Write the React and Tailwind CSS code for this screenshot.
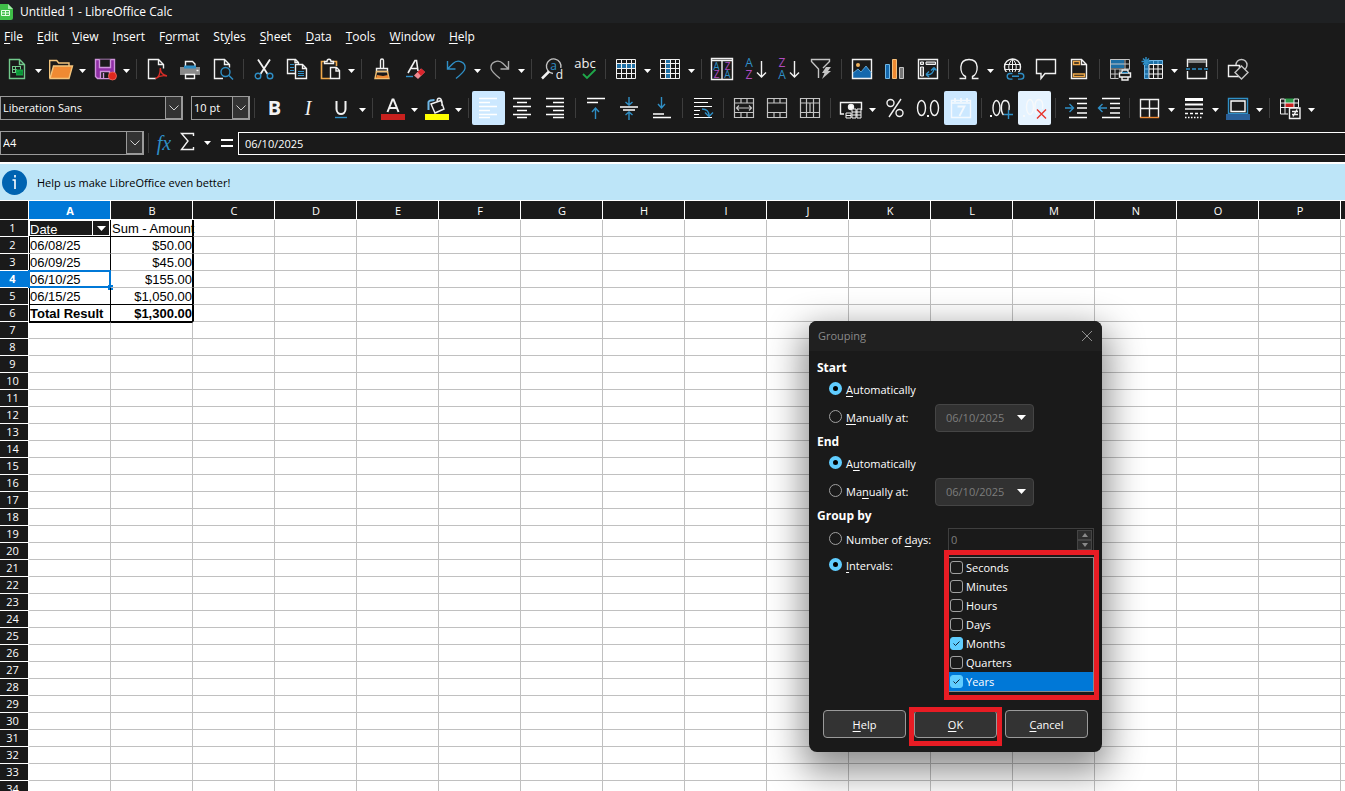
import React, { useState } from 'react';
import clsx from 'clsx';

const BLUE = '#2f8fc6';
const LIGHT = '#f2f2f2';
const GREY = '#c4c4c4';

function Glyph({ children, stroke = LIGHT, width = 1.4 }) {
  return (
    <svg viewBox="0 0 24 24" className="size-6 shrink-0 overflow-visible" fill="none" stroke={stroke} strokeWidth={width} aria-hidden="true">
      {children}
    </svg>
  );
}

function GlyphText({ x, y, size, fill = LIGHT, children, ...rest }) {
  return (
    <text x={x} y={y} fontSize={size} fill={fill} stroke="none" textAnchor="middle" {...rest}>
      {children}
    </text>
  );
}

const icons = {
  new: (
    <Glyph stroke="#72c98c">
      <path d="M4.5 2.5h10l5 5v14h-15z M14.5 2.5v5h5" />
      <path d="M7 9.500h9M7 12.500h5M7 15.500h5M7.500 9.500v6M10.500 9.500v6M15.500 9.500v3" strokeWidth="1" />
      <path d="M11 12.500h7v6h-7z" fill="#12a33f" stroke="none" />
      <path d="M13 17v-2M15 17v-3M16.800 17v-2.500" stroke="#083" strokeWidth="1" />
    </Glyph>
  ),
  open: (
    <Glyph stroke="#f2c47c">
      <path d="M.7 21V3.500h7l2 2.500H20v3" />
      <path d="M4.500 9H23.500L20 21.500H1z" fill="#ef8a33" />
    </Glyph>
  ),
  save: (
    <Glyph stroke="#cf93dc">
      <path d="M2.500 2.500h19v19H4.500l-2-2z" fill="#8f2fa5" />
      <path d="M6.500 2.500v8h11v-8M7.500 21v-6.500h9V21" fill="#1a1a1a" />
      <path d="M10.500 16v5" />
      <circle cx="19.500" cy="19" r="4" fill="#e0281e" stroke="#f06a5c" strokeWidth=".8" />
    </Glyph>
  ),
  pdf: (
    <Glyph>
      <path d="M11 21.500H3.500v-19h10l5 5v4M13.500 2.500v5h5" />
      <path d="M10.500 21.500c3-1 4.800-5 4.800-10.500 0 4.500 2.500 7 6.700 8-4-1-8 0-11.500 2.500z" stroke="#d92d27" />
    </Glyph>
  ),
  print: (
    <Glyph>
      <path d="M7.500 9V4.500h7l2.500 2.500v2" />
      <path d="M2 10h20v8H2z" fill="#8a8a8a" stroke="none" />
      <path d="M6 8.500h12v3H6z" fill={BLUE} stroke="none" />
      <path d="M7.500 17.500h9v4h-9z" fill="#1a1a1a" />
      <path d="M18.500 13.500h2" />
    </Glyph>
  ),
  preview: (
    <Glyph>
      <path d="M12 21.500H3.500v-19h10l5 5v3M13.500 2.500v5h5" />
      <circle cx="14.500" cy="15" r="4.500" stroke={BLUE} />
      <path d="M18 18.500l4 4" stroke={BLUE} />
    </Glyph>
  ),
  cut: (
    <Glyph>
      <path d="M6 2.500L15.500 17M18 2.500L8.500 17" strokeWidth="1.800" />
      <circle cx="6" cy="19" r="2.800" stroke={BLUE} />
      <circle cx="18" cy="19" r="2.800" stroke={BLUE} />
    </Glyph>
  ),
  copy: (
    <Glyph>
      <path d="M10 16.500H2.500v-14h8l3 3v2M10 2.500v3h3.500" />
      <path d="M10.500 7.500h7l4 4v10h-11zM17.500 7.500v4h4" />
      <path d="M5 7.500h4M5 10.500h4M5 13.500h4M13 14.500h6M13 16.500h6M13 18.500h6" stroke={BLUE} strokeWidth="1" />
    </Glyph>
  ),
  paste: (
    <Glyph>
      <path d="M7 4.500H3.500v17H12M14 4.500h4.500V9" stroke="#f0a94a" strokeWidth="1.600" />
      <path d="M6.500 6.500v-2h2.500c0-3 4-3 4 0h2.500v2z" />
      <path d="M12.500 10.500h6l3 3v8h-9zM18 10.500v3.500h3.500" />
    </Glyph>
  ),
  clone: (
    <Glyph>
      <path d="M10.500 11V3.500c0-2 3-2 3 0V11M6.500 11.500h11v3h-11z" />
      <path d="M6.500 14.500L5 21.500h14l-1.500-7z" stroke="#f0c074" />
      <path d="M7 18l6 1 5-1 .8 3H6z" fill="#ef8a33" stroke="none" />
    </Glyph>
  ),
  clear: (
    <Glyph>
      <path d="M5 16L12 3.500h1.500L15 14M7.500 11.500h7" strokeWidth="1.600" />
      <path d="M3 19.500h7" stroke={BLUE} />
      <path d="M11 18.500l7-7 4 3.500-7 7z" fill="#ee8a92" stroke="none" />
      <path d="M14.500 15l4-3.500 3.500 3.500-4 4z" fill="#d9252c" stroke="none" />
    </Glyph>
  ),
  undo: (
    <Glyph stroke={BLUE}>
      <path d="M3.500 4v8h8M3.500 12L9 6.500c5-5 13-1 12 5-.5 3-4 6-9 10" />
    </Glyph>
  ),
  redo: (
    <Glyph stroke="#a9a9a9">
      <path d="M20.500 4v8h-8M20.500 12L15 6.500c-5-5-13-1-12 5 .5 3 4 6 9 10" />
    </Glyph>
  ),
  find: (
    <Glyph stroke={GREY}>
      <path d="M13 16.500a7.300 7.300 0 117.800-5.500" />
      <path d="M9 14.500l-7 7" strokeWidth="2.500" stroke={LIGHT} />
      <GlyphText x={13.500} y={13} size={12} fill={BLUE}>
        a
      </GlyphText>
      <GlyphText x={19.500} y={22} size={12}>
        d
      </GlyphText>
    </Glyph>
  ),
  spell: (
    <Glyph>
      <GlyphText x={12} y={11} size={13}>
        abc
      </GlyphText>
      <path d="M10 17l4 4 8.500-8.500" stroke="#1fa84a" strokeWidth="1.800" />
    </Glyph>
  ),
  row: (
    <Glyph>
      <path d="M2 7h20v5H2z" fill="#1d6fa5" stroke="none" />
      <path d="M2.500 2.500h19v19h-19zM2.500 6.500h19M2.500 11.500h19M2.500 16.500h19M7.500 2.500v19M12.500 2.500v19M17.500 2.500v19" strokeWidth="1" />
    </Glyph>
  ),
  col: (
    <Glyph>
      <path d="M7 2h5v20H7z" fill="#1d6fa5" stroke="none" />
      <path d="M2.500 2.500h19v19h-19zM2.500 6.500h19M2.500 11.500h19M2.500 16.500h19M7.500 2.500v19M12.500 2.500v19M17.500 2.500v19" strokeWidth="1" />
    </Glyph>
  ),
  sort: (
    <Glyph>
      <path d="M1.500 1.500h21v21h-21zM1.500 3.500h21M12 3v19" />
      <GlyphText x={6.500} y={13} size={10} fill={BLUE}>
        A
      </GlyphText>
      <GlyphText x={6.500} y={21} size={10} fill="#b04cc0">
        Z
      </GlyphText>
      <GlyphText x={17.500} y={13} size={10} fill="#b04cc0">
        Z
      </GlyphText>
      <GlyphText x={17.500} y={21} size={10} fill={BLUE}>
        A
      </GlyphText>
    </Glyph>
  ),
  az: (
    <Glyph>
      <GlyphText x={6} y={10} size={12} fill={BLUE}>
        A
      </GlyphText>
      <GlyphText x={6} y={22} size={12} fill="#b04cc0">
        Z
      </GlyphText>
      <path d="M18.500 4v16M14 15.500l4.500 4.500 4.500-4.500" />
    </Glyph>
  ),
  za: (
    <Glyph>
      <GlyphText x={6} y={10} size={12} fill="#b04cc0">
        Z
      </GlyphText>
      <GlyphText x={6} y={22} size={12} fill={BLUE}>
        A
      </GlyphText>
      <path d="M18.500 4v16M14 15.500l4.500 4.500 4.500-4.500" />
    </Glyph>
  ),
  filter: (
    <Glyph stroke={GREY}>
      <path d="M9.500 21V12L2.500 4.500v-2h18v2L14 11" />
      <path d="M17 10h5l-3 4h3l-9 8 2.500-6H13z" fill={GREY} stroke="none" />
    </Glyph>
  ),
  image: (
    <Glyph>
      <path d="M3 21v-5l5-4 3 3 5-6 6 7v5z" fill="#1468ad" stroke="none" />
      <path d="M2.500 2.500h19v19h-19z" />
      <path d="M3 16l5-4 3 3 5-6 5.500 7" stroke="#6fb7e6" strokeWidth=".8" />
      <circle cx="8" cy="8" r="2" fill="#f0b25c" stroke="none" />
    </Glyph>
  ),
  chart: (
    <Glyph>
      <path d="M2.500 7.500h4v14h-4z" fill="#1468ad" stroke="#6fb7e6" strokeWidth="1" />
      <path d="M9.500 2.500h4v19h-4z" fill="#ef8a33" stroke="#f5bf7a" strokeWidth="1" />
      <path d="M16.500 10.500h4v11h-4z" fill="#777" stroke={GREY} strokeWidth="1" />
    </Glyph>
  ),
  pivot: (
    <Glyph>
      <path d="M2.500 2.500h19v19h-19z" />
      <path d="M4.500 5h3v2.500h-3zM10 5h9.500v2.500H10zM4.500 10h3v9h-3z" strokeWidth="1" fill="#777" />
      <path d="M10 17.500c5 1 8-2 8-7M10 17.500l3-3M10 17.500l3 2.500M18 10.500l-3 3M18 10.500l2.500 3" stroke={BLUE} />
    </Glyph>
  ),
  omega: (
    <Glyph>
      <path d="M2.500 21.500h6v-2c-6-3-7.500-17 3.500-17s9.500 14 3.500 17v2h6" />
    </Glyph>
  ),
  link: (
    <Glyph>
      <circle cx="11.500" cy="10" r="8" />
      <path d="M3.500 7.500h16M3.500 12.500h16M11.500 2v16M11.500 2c-5 5-5 11 0 16M11.500 2c5 5 5 11 0 16" strokeWidth="1" />
      <path d="M4 15h19v8H4z" fill="#1a1a1a" stroke="none" />
      <path d="M11.500 16.500H9a2.800 2.800 0 000 5.600h2.500M17 16.500h3a2.800 2.800 0 010 5.600h-3M11 19.300h7" stroke={BLUE} />
    </Glyph>
  ),
  comment: (
    <Glyph>
      <path d="M2.500 2.500h19v14H11l-4 5v-5H2.500z" />
    </Glyph>
  ),
  header: (
    <Glyph>
      <path d="M4.500 2.500h10l5 5v14h-15zM14.500 2.500v5h5" />
      <path d="M6.500 4.500h6v3h-6zM6.500 17h11v2.500h-11z" stroke="#f0a94a" />
    </Glyph>
  ),
  printArea: (
    <Glyph>
      <path d="M2 2h14v9H2z" fill="#1d6fa5" stroke="none" />
      <path d="M2.500 2.500h19v10M2.500 2.500v19h8M2.500 7h19M2.500 12h19M2.500 17h8M7 12v9.500M12 12v3M17 2.500v10" strokeWidth="1" stroke={GREY} />
      <path d="M14 16v-3h6v3M11.500 16h11v4h-11zM14 20h6v3h-6z" fill="#1a1a1a" />
      <path d="M14 15.500h6" stroke={BLUE} />
    </Glyph>
  ),
  freeze: (
    <Glyph>
      <path d="M3 3h19v4H8v15H3z" fill="#1d6fa5" stroke="none" />
      <path d="M8 7.500h13.500v14H8zM8 12h13.500M8 17h13.500M12.500 7.500v14M17 7.500v14" strokeWidth="1" />
      <path d="M8 3.500h13.500v4M3.500 8v13.500H8M3.500 12l4 0M3.500 17h4M12.500 3v4M17 3v4" stroke="#6fb7e6" strokeWidth="1" />
      <path d="M5 0v9M.5 4.500h9M2 1.500l6 6M8 1.500l-6 6" stroke={BLUE} />
    </Glyph>
  ),
  split: (
    <Glyph>
      <path d="M2.500 10V2.500h19V10M2.500 14v7.500h19V14" />
      <path d="M3 4.500h18" stroke="#888" strokeWidth="3" />
      <path d="M1 12h22" stroke={BLUE} strokeDasharray="4 2" />
    </Glyph>
  ),
  shapes: (
    <Glyph>
      <circle cx="15.500" cy="8" r="5.500" stroke={GREY} />
      <path d="M2.500 8.500h11v11h-11z" fill="#1a1a1a" />
      <path d="M15.500 9l6.500 6.500-6.500 6.500L9 15.500z" stroke={GREY} fill="#1a1a1a" />
    </Glyph>
  ),
  bold: (
    <Glyph>
      <GlyphText x={11.500} y={19} size={20} fontWeight="700">
        B
      </GlyphText>
    </Glyph>
  ),
  italic: (
    <Glyph>
      <GlyphText x={12} y={19} size={20} fontStyle="italic" fontFamily="Liberation Serif, serif">
        I
      </GlyphText>
    </Glyph>
  ),
  underline: (
    <Glyph>
      <path d="M7.500 5v8c0 6.500 9 6.500 9 0V5" strokeWidth="2" />
      <path d="M6 21.500h12" stroke={BLUE} />
    </Glyph>
  ),
  fontColor: (
    <Glyph>
      <path d="M6.500 16L11.500 3.500h1L17.500 16M8.500 12h7" strokeWidth="2" />
      <path d="M0 18h24v6H0z" fill="#c9211e" stroke="none" />
    </Glyph>
  ),
  highlight: (
    <Glyph>
      <path d="M3.500 14V6c1-1.500 3-2 6-2" stroke="#6fb7e6" strokeWidth="2" />
      <path d="M6 8l10-3.500 3 8.500-9 4zM12 6c0-5 4-5 5 0v4" />
      <path d="M0 18h24v6H0z" fill="#ffff00" stroke="none" />
    </Glyph>
  ),
  left: (
    <Glyph stroke="#fff">
      <path d="M2 2.500h18M2 6.500h11M2 10.500h18M2 14.500h11M2 18.500h18M2 21.500h11" />
    </Glyph>
  ),
  center: (
    <Glyph stroke="#fff">
      <path d="M3 2.500h18M7 6.500h10M3 10.500h18M7 14.500h10M3 18.500h18M7 21.500h10" />
    </Glyph>
  ),
  right: (
    <Glyph stroke="#fff">
      <path d="M3 2.500h18M10 6.500h11M3 10.500h18M10 14.500h11M3 18.500h18M10 21.500h11" />
    </Glyph>
  ),
  top: (
    <Glyph stroke="#fff">
      <path d="M3 2.500h18M3 6.500h11" />
      <path d="M11.500 23V12M8 16l3.500-4 3.500 4" stroke={BLUE} />
    </Glyph>
  ),
  middle: (
    <Glyph stroke="#fff">
      <path d="M3 11h18M6 14h12" />
      <path d="M12 1v8M8.500 6L12 9l3.500-3M12 24v-8M8.500 19l3.500-3 3.500 3" stroke={BLUE} />
    </Glyph>
  ),
  bottom: (
    <Glyph stroke="#fff">
      <path d="M3 18h11M3 21.500h18" />
      <path d="M11.500 1v11M8 8l3.500 4L15 8" stroke={BLUE} />
    </Glyph>
  ),
  wrap: (
    <Glyph stroke="#fff">
      <path d="M3 2.500h18M3 6.500h14M3 10.500h18M3 14.500h6M3 18.500h5M3 21.500h18" strokeWidth="1.200" />
      <path d="M11 13c5 0 7 2 7 7M14 16.500l4 4 4-4" stroke={BLUE} />
    </Glyph>
  ),
  merge: (
    <Glyph stroke={GREY}>
      <path d="M2.500 2.500h19v19h-19zM2.500 7h19M2.500 16.500h19M9 2.500V7M15 2.500V7M9 16.500v5M15 16.500v5M4.500 12h15M7 9.500L4.500 12 7 14.500M17 9.500l2.500 2.500-2.500 2.500" strokeWidth="1.200" />
    </Glyph>
  ),
  mergeCells: (
    <Glyph stroke={GREY}>
      <path d="M2.500 2.500h19v19h-19zM2.500 7h19M2.500 16.500h19M9 2.500V7M15 2.500V7M9 16.500v5M15 16.500v5" strokeWidth="1.200" />
    </Glyph>
  ),
  splitCells: (
    <Glyph stroke={GREY}>
      <path d="M2.500 2.500h19v19h-19zM2.500 7h19M2.500 16.500h19M8.500 2.500v19M15.500 2.500v19M12 7v9.500" strokeWidth="1.200" />
    </Glyph>
  ),
  currency: (
    <Glyph>
      <path d="M5 18H1.500V6.500h21V14" />
      <circle cx="12" cy="11" r="2.500" fill="#fff" />
      <path d="M7 17h5v5H7zM13 13h4v9h-4zM18 13h4v9h-4zM7 19.500h5M13 16h9M13 19h9" strokeWidth="1" fill="#1a1a1a" />
    </Glyph>
  ),
  percent: (
    <Glyph>
      <circle cx="7.500" cy="7" r="3.500" />
      <circle cx="16.500" cy="17" r="3.500" />
      <path d="M18 3L6 21" />
    </Glyph>
  ),
  number: (
    <Glyph>
      <ellipse cx="5.500" cy="12" rx="4" ry="7.500" />
      <ellipse cx="18.500" cy="12" rx="4" ry="7.500" />
      <path d="M11 20h2" strokeWidth="2" />
    </Glyph>
  ),
  date: (
    <Glyph stroke="#f4f9fe">
      <path d="M2.500 4.500h19v17h-19zM3 7h18" />
      <path d="M6 2v4M12 2v4M18 2v4M8.500 10.500h7l-5 9.500" strokeWidth="1.800" />
    </Glyph>
  ),
  addDecimal: (
    <Glyph>
      <path d="M0 20h2" strokeWidth="2" />
      <ellipse cx="6.500" cy="12" rx="3.500" ry="7.500" />
      <path d="M13.500 19c-3-3-3-14 1.500-14.500 3.500 0 5 4 4 9.500" />
      <path d="M18.500 14v9M14 18.500h9" stroke={BLUE} />
    </Glyph>
  ),
  delDecimal: (
    <Glyph stroke="#f7f9fb">
      <path d="M0 20h2" strokeWidth="2" />
      <ellipse cx="7" cy="11" rx="3.500" ry="7.500" />
      <path d="M14 18c-3-3-3-14 1.500-14.500 3.500 0 5 4 4 9.500" />
      <path d="M14 13.500l9 9M23 13.500l-9 9" stroke="#e8352e" />
    </Glyph>
  ),
  indent: (
    <Glyph stroke="#fff">
      <path d="M5 2.500h18M13 7.500h10M13 12h10M13 17h10M5 21.500h18" />
      <path d="M1 12h8M5.500 8L9.500 12l-4 4" stroke={BLUE} />
    </Glyph>
  ),
  outdent: (
    <Glyph stroke="#fff">
      <path d="M5 2.500h18M13 7.500h10M13 12h10M13 17h10M5 21.500h18" />
      <path d="M10 12H2M5.500 8L1.500 12l4 4" stroke={BLUE} />
    </Glyph>
  ),
  borders: (
    <Glyph>
      <path d="M2.500 21.500v-18h18v18M11.500 3.500v18M2.500 12.500h18" />
      <path d="M2 21.500h19" stroke="#ef8a33" />
    </Glyph>
  ),
  lineStyle: (
    <Glyph stroke="#fff">
      <path d="M3 3.500h18" strokeWidth="3" />
      <path d="M3 8.500h18" strokeWidth="2" />
      <path d="M3 13h18" />
      <path d="M3 17.500h18" strokeDasharray="3 2" />
      <path d="M3 21.500h18" strokeDasharray="1.500 1.500" />
    </Glyph>
  ),
  borderColor: (
    <Glyph stroke="#fff">
      <path d="M2.500 2.500h19v15h-19z" stroke={BLUE} />
      <path d="M5 5h14v10.500H5z" />
      <path d="M0 18h24v6H0z" fill="#2a6099" stroke="none" />
    </Glyph>
  ),
  conditional: (
    <Glyph>
      <path d="M7 2.500h9v4.500H7z" fill="#2e9e4a" stroke="none" />
      <path d="M7 7h9v4.500H7z" fill="#c9211e" stroke="none" />
      <path d="M2.500 3v15H10M2.500 7h18M2.500 11.500h18M7 3v15M16 3v8M20.500 3v8M2.500 3h4M16 3h4.500" strokeWidth="1" />
      <path d="M11.500 12h10.500v10.500H11.500z" fill="#1a1a1a" />
      <path d="M14 15.500h6M14 18.500h6M19 13.500l-4 7" />
    </Glyph>
  ),
};

// '|' is a separator, a trailing '+' adds a drop-down arrow, '*' marks a pressed toggle
const STANDARD_BAR =
  'new+ open+ save+ | pdf print preview | cut copy paste+ | clone clear | undo+ redo+ | find spell | row+ col+ | sort az za filter | image chart pivot | omega+ link comment header | printArea freeze+ split | shapes';
const FORMAT_BAR =
  '| bold italic underline+ | fontColor+ highlight+ | left* center right | top middle bottom | wrap | merge mergeCells splitCells | currency+ percent number date* | addDecimal delDecimal* | indent outdent | borders+ lineStyle+ borderColor+ | conditional+';

// label and the index of its access key
const MENUS = [
  ['File', 0],
  ['Edit', 0],
  ['View', 0],
  ['Insert', 0],
  ['Format', 1],
  ['Styles', 2],
  ['Sheet', 0],
  ['Data', 0],
  ['Tools', 0],
  ['Window', 0],
  ['Help', 0],
];

const PIVOT = [
  ['06/08/25', '$50.00'],
  ['06/09/25', '$45.00'],
  ['06/10/25', '$155.00'],
  ['06/15/25', '$1,050.00'],
  ['Total Result', '$1,300.00'],
];

const COLUMNS = 'ABCDEFGHIJKLMNOPQ'.split('');
const ROWS = Array.from({ length: 34 }, (_, i) => i + 1);

function Mnemonic({ text, at = 0 }) {
  return (
    <>
      {text.slice(0, at)}
      <span className="underline underline-offset-2">{text[at]}</span>
      {text.slice(at + 1)}
    </>
  );
}

function Caret() {
  return (
    <svg viewBox="0 0 7 4" className="h-1 w-[7px]" fill="#fff" aria-hidden="true">
      <path d="M0 0h7L3.500 4z" />
    </svg>
  );
}

function Chevron() {
  return (
    <svg viewBox="0 0 10 6" className="h-1.5 w-2.5" fill="none" stroke="#d0d0d0" aria-hidden="true">
      <path d="M.5 .5L5 5 9.500 .5" />
    </svg>
  );
}

function Separator() {
  return (
    <div className="flex w-2 shrink-0 justify-center">
      <div className="h-5 w-px bg-[#3d3d3d]" />
    </div>
  );
}

function Toolbar({ items }) {
  return items.split(' ').map((item, i) => {
    if (item === '|') return <Separator key={i} />;
    const name = item.replace(/[+*]/, '');
    return (
      <React.Fragment key={i}>
        <button
          type="button"
          aria-label={name}
          className={clsx(
            'flex h-[34px] w-[33px] shrink-0 items-center justify-center rounded-xs',
            item.endsWith('*') && (name === 'delDecimal' ? 'bg-[#e5f3ff]' : 'bg-[#cce8ff]'),
          )}
        >
          {icons[name]}
        </button>
        {item.endsWith('+') && (
          <button type="button" aria-label={`${name} options`} className="flex h-[34px] w-[11px] shrink-0 items-center justify-center pt-1">
            <Caret />
          </button>
        )}
      </React.Fragment>
    );
  });
}

function Combo({ label, value, className }) {
  return (
    <div className={clsx('relative h-6 shrink-0', className)}>
      <select
        aria-label={label}
        defaultValue={value}
        className="h-full w-full appearance-none border border-[#9a9a9a] bg-[#1a1a1a] pl-0.5 text-white"
      >
        <option>{value}</option>
      </select>
      <span className="pointer-events-none absolute inset-y-0 right-0 flex w-[18px] items-center justify-center border border-r-2 border-b-2 border-[#9a9a9a] bg-[#333]">
        <Chevron />
      </span>
    </div>
  );
}

function DateCell() {
  return (
    <div className="m-px flex h-3.5 items-center bg-[#1a1a1a] text-white">
      <span className="flex-1 pt-[3px]">Date</span>
      <button type="button" aria-label="Filter Date" className="flex h-full w-[17px] items-center justify-center border-l border-white">
        <svg viewBox="0 0 9 5" className="h-[5px] w-[9px]" fill="#fff" aria-hidden="true">
          <path d="M0 0h9L4.500 5z" />
        </svg>
      </button>
    </div>
  );
}

function Cell({ row, col }) {
  const inPivot = row <= 6 && col < 2;
  if (!inPivot) {
    return (
      <td
        className={clsx(
          'h-[17px] border-r border-b border-[#c0c0c0] p-0',
          row <= 6 && col === 2 && 'border-l border-l-black',
          row === 7 && col < 2 && 'border-t border-t-black',
        )}
      />
    );
  }

  const selected = row === 4 && col === 0;
  return (
    <td
      className={clsx(
        'relative h-[17px] border-r border-b border-r-black p-0 leading-[18px] whitespace-nowrap',
        col === 1 && 'text-right',
        row === 1 || row >= 5 ? 'border-b-black' : 'border-b-[#c0c0c0]',
        row === 6 && 'font-bold',
      )}
    >
      {row === 1 && col === 0 && <DateCell />}
      {row === 1 && col === 1 && <div className="h-4 w-20 pl-px text-left">Sum - Amount</div>}
      {row > 1 && <div className={clsx('h-4', col === 0 && 'border-l border-black')}>{PIVOT[row - 2][col]}</div>}
      {selected && (
        <span className="absolute -inset-px border-2 border-[#0078d7]">
          <span className="absolute -right-1 -bottom-1 size-[5px] bg-[#0078d7]" />
        </span>
      )}
    </td>
  );
}

function Sheet() {
  return (
    <div className="min-h-0 flex-1 overflow-hidden bg-white">
      <table className="w-[1423px] table-fixed border-separate border-spacing-0 font-['Liberation_Sans',Arial,sans-serif] text-[13px] text-black">
        <colgroup>
          <col className="w-[29px]" />
          {COLUMNS.map((c) => (
            <col key={c} className="w-[82px]" />
          ))}
        </colgroup>
        <thead className="font-['Open_Sans','Noto_Sans',sans-serif] text-[11px]">
          <tr>
            <th aria-label="Select all" className="h-[19px] border-r border-b border-white bg-[#1a1a1a] p-0" />
            {COLUMNS.map((c) => (
              <th
                key={c}
                scope="col"
                className={clsx(
                  'h-[19px] border-r border-b border-white p-0 pt-px pl-px leading-4 text-white',
                  c === 'A' ? 'bg-[#0078d7] font-bold' : 'bg-[#1a1a1a] font-normal',
                )}
              >
                {c}
              </th>
            ))}
          </tr>
        </thead>
        <tbody>
          {ROWS.map((r) => (
            <tr key={r}>
              <th
                scope="row"
                className={clsx(
                  "h-[17px] border-r border-b border-white p-0 pr-[3px] text-center font-['Open_Sans','Noto_Sans',sans-serif] text-[11px] leading-4 text-white",
                  r === 4 ? 'bg-[#0078d7] font-bold' : 'bg-[#1a1a1a] font-normal',
                )}
              >
                {r}
              </th>
              {COLUMNS.map((c, i) => (
                <Cell key={c} row={r} col={i} />
              ))}
            </tr>
          ))}
        </tbody>
      </table>
    </div>
  );
}

function Radio({ name, label, at, defaultChecked }) {
  return (
    <label className="flex items-start gap-1 pl-3">
      <input
        type="radio"
        name={name}
        defaultChecked={defaultChecked}
        className="size-[13px] appearance-none rounded-full border border-[#a0a0a0] checked:border-4 checked:border-[#60cdff] checked:bg-black"
      />
      <span>
        <Mnemonic text={label} at={at} />
      </span>
    </label>
  );
}

function RangeSection({ title, name, autoAt, manualAt }) {
  return (
    <fieldset>
      <legend className="h-4 pt-px text-[12px] leading-4 font-bold">{title}</legend>
      <div className="flex h-7 items-center pt-px">
        <Radio name={name} label="Automatically" at={autoAt} defaultChecked />
      </div>
      <div className="flex h-[30px] items-center">
        <div className="w-[118px]">
          <Radio name={name} label="Manually at:" at={manualAt} />
        </div>
        <div className="relative h-7 w-[99px]">
          <select
            disabled
            aria-label={`${title} date`}
            className="h-full w-full appearance-none rounded border border-[#454545] bg-[#313131] pl-2.5 text-[#7d7d7d] opacity-100"
          >
            <option>06/10/2025</option>
          </select>
          <svg viewBox="0 0 9 5" className="pointer-events-none absolute top-[11px] right-2 h-[5px] w-[9px]" fill="#fff" aria-hidden="true">
            <path d="M0 0h9L4.500 5z" />
          </svg>
        </div>
      </div>
    </fieldset>
  );
}

function IntervalList() {
  const [checked, setChecked] = useState(['Months', 'Years']);
  const toggle = (n) => setChecked((prev) => (prev.includes(n) ? prev.filter((x) => x !== n) : [...prev, n]));

  return (
    <div className="relative mt-0.5 w-[146px] border border-[#8a8a8a]">
      {['Seconds', 'Minutes', 'Hours', 'Days', 'Months', 'Quarters', 'Years'].map((n) => (
        <label key={n} className={clsx('flex h-[19px] items-center gap-[3px] pl-px', n === 'Years' && 'bg-[#0078d7]')}>
          <span className="relative size-[13px]">
            <input
              type="checkbox"
              checked={checked.includes(n)}
              onChange={() => toggle(n)}
              className="block size-[13px] appearance-none rounded-[3px] border border-[#a0a0a0] checked:border-[#60cdff] checked:bg-[#60cdff]"
            />
            {checked.includes(n) && (
              <svg viewBox="0 0 13 13" className="pointer-events-none absolute inset-0" fill="none" stroke="#123" aria-hidden="true">
                <path d="M3.500 6.500l2 2 4-4" />
              </svg>
            )}
          </span>
          {n}
        </label>
      ))}
      <span className="pointer-events-none absolute -top-2 -right-1.5 -bottom-[9px] -left-[5px] border-5 border-[#e81c24]" />
    </div>
  );
}

function DialogButton({ text, marked }) {
  return (
    <div className="relative">
      <button type="button" className="h-7 w-[83px] rounded border border-[#9a9a9a] bg-[#333] pt-px">
        <Mnemonic text={text} />
      </button>
      {marked && <span className="pointer-events-none absolute -top-[3px] -right-[5px] -bottom-2 -left-[5px] border-5 border-[#e81c24]" />}
    </div>
  );
}

function GroupingDialog() {
  return (
    <section
      role="dialog"
      aria-label="Grouping"
      className="absolute top-[321px] left-[809px] w-[293px] overflow-hidden rounded-lg bg-[#1a1a1a] text-white shadow-[0_14px_36px_6px_rgba(0,0,0,0.45)]"
    >
      <header className="flex h-[30px] items-center justify-between bg-[#202020] pr-2.5 pl-[9px] text-[#8a8a8a]">
        <h2>Grouping</h2>
        <button type="button" aria-label="Close">
          <svg viewBox="0 0 10 10" className="size-2.5" stroke="#8f8f8f" aria-hidden="true">
            <path d="M0 0l10 10M10 0L0 10" />
          </svg>
        </button>
      </header>
      <div className="px-2 pt-2 pb-3.5">
        <RangeSection title="Start" name="start" autoAt={0} manualAt={0} />
        <RangeSection title="End" name="end" autoAt={1} manualAt={2} />
        <fieldset>
          <legend className="h-[18px] text-[12px] leading-[18px] font-bold">Group by</legend>
          <div className="flex h-[30px] items-center justify-between">
            <Radio name="group" label="Number of days:" at={10} />
            <div className="flex h-6 w-[146px] items-center border border-[#3f3f3f] pr-px">
              <input disabled aria-label="Days" defaultValue="0" className="min-w-0 flex-1 pl-0.5 text-[#7d7d7d]" />
              <div className="flex flex-col">
                {['M0 4h6L3 0z', 'M0 0h6L3 4z'].map((d, i) => (
                  <button
                    key={d}
                    type="button"
                    disabled
                    aria-label={i ? 'Decrease' : 'Increase'}
                    className="flex h-2.5 w-[15px] items-center justify-center border border-[#454545] bg-[#2d2d2d]"
                  >
                    <svg viewBox="0 0 6 4" className="h-1 w-1.5" fill="#8a8a8a" aria-hidden="true">
                      <path d={d} />
                    </svg>
                  </button>
                ))}
              </div>
            </div>
          </div>
          <div className="flex items-start justify-between">
            <div className="flex h-5 items-center pt-0.5">
              <Radio name="group" label="Intervals:" at={0} defaultChecked />
            </div>
            <IntervalList />
          </div>
        </fieldset>
        <div className="mt-[18px] flex justify-center gap-2">
          <DialogButton text="Help" />
          <DialogButton text="OK" marked />
          <DialogButton text="Cancel" />
        </div>
      </div>
    </section>
  );
}

export default function App() {
  return (
    <div className="relative flex h-screen flex-col overflow-hidden bg-[#1a1a1a] font-['Open_Sans','Noto_Sans',sans-serif] text-[11px] leading-4 text-white">
      <header className="flex h-[23px] shrink-0 items-center gap-[7px] bg-[#1f2123] text-[12px]">
        <svg viewBox="0 0 13 16" className="h-4 w-[13px]" aria-hidden="true">
          <path d="M0 0h8l5 5v9q0 2-2 2H0z" fill="#3fbf48" />
          <path d="M8 0l5 5H8z" fill="#a5ecaa" />
          <path d="M1.500 6.500h8v5h-8zM1.500 9h8M5.500 6.500v5" fill="none" stroke="#e6ffe6" />
        </svg>
        <h1>Untitled 1 - LibreOffice Calc</h1>
      </header>

      <nav className="flex h-[27px] shrink-0 items-center gap-3.5 pt-px pl-1 text-[12px]">
        {MENUS.map(([label, at]) => (
          <button key={label} type="button">
            <Mnemonic text={label} at={at} />
          </button>
        ))}
      </nav>

      <div className="flex h-[38px] shrink-0 items-center">
        <Toolbar items={STANDARD_BAR} />
      </div>

      <div className="flex h-10 shrink-0 items-center">
        <Combo label="Font name" value="Liberation Sans" className="w-[183px]" />
        <Combo label="Font size" value="10 pt" className="ml-2 w-[59px]" />
        <Toolbar items={FORMAT_BAR} />
      </div>

      <div className="flex h-[35px] shrink-0 items-center border-b border-white pb-1">
        <Combo label="Name box" value="A4" className="w-36" />
        <Separator />
        <button
          type="button"
          aria-label="Function wizard"
          className="w-6 text-center font-['Liberation_Serif',serif] text-[20px] text-[#2f8fc6] italic"
        >
          fx
        </button>
        <button type="button" aria-label="Sum" className="w-6">
          <svg viewBox="0 0 24 24" className="size-6" fill="none" stroke="#f2f2f2" strokeWidth="1.4" aria-hidden="true">
            <path d="M17.500 5V2.500h-12L12 10l-6.500 8.500h12V16" />
          </svg>
        </button>
        <button type="button" aria-label="Sum options" className="flex h-6 w-[15px] items-center justify-center">
          <Caret />
        </button>
        <button type="button" aria-label="Formula" className="flex w-[23px] flex-col items-center gap-1">
          <span className="h-0.5 w-3 bg-white" />
          <span className="h-0.5 w-3 bg-white" />
        </button>
        <input aria-label="Input line" defaultValue="06/10/2025" className="h-[23px] min-w-0 flex-1 border border-r-0 border-white pl-1.5" />
      </div>

      <div className="flex h-[38px] shrink-0 items-center gap-2.5 border-y border-y-white bg-[#bde5f8] pl-0.5 text-black">
        <svg viewBox="0 0 25 25" className="size-[25px]" aria-hidden="true">
          <circle cx="12.500" cy="12.500" r="12.500" fill="#0063b1" />
          <path d="M10.500 10h2.500v9M13 5v2.500" fill="none" stroke="#fff" strokeWidth="1.600" />
        </svg>
        <p className="pt-0.5">Help us make LibreOffice even better!</p>
      </div>

      <Sheet />
      <GroupingDialog />
    </div>
  );
}
